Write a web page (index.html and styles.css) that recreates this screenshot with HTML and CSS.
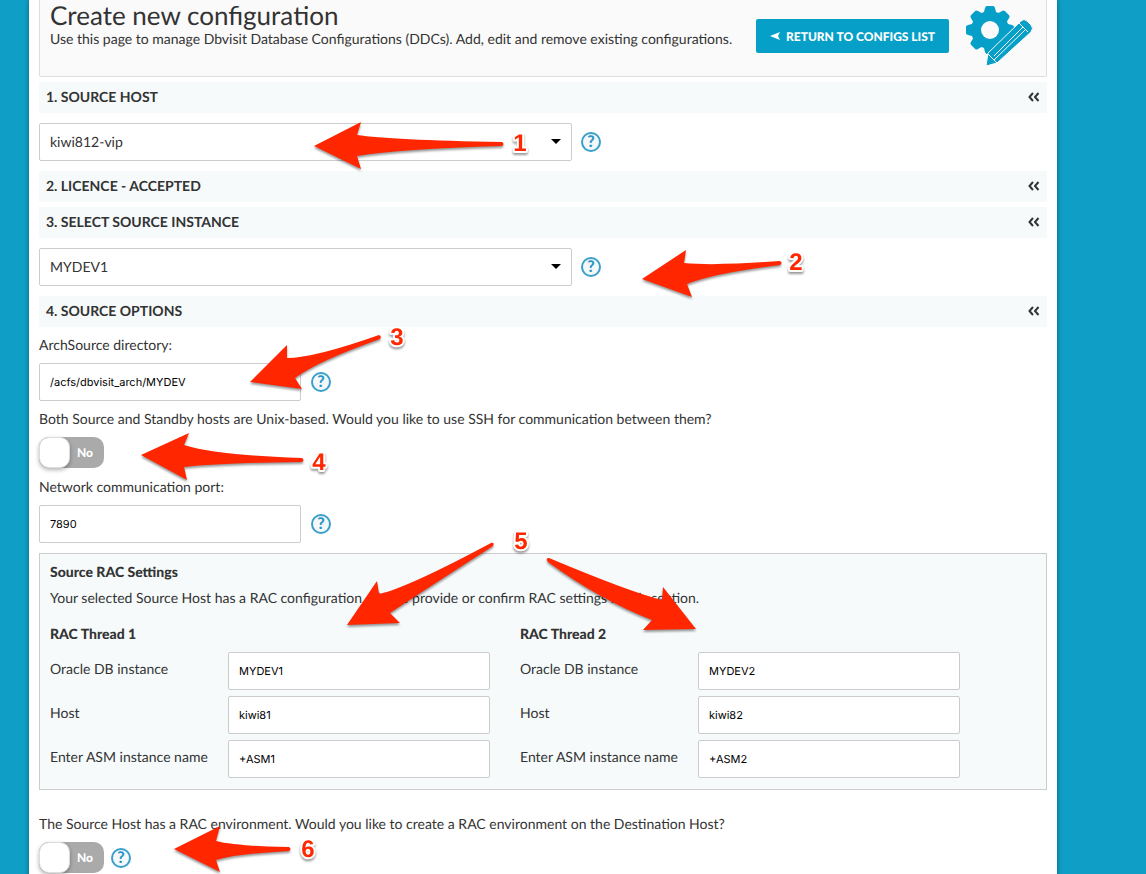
FILE: index.html
```html
<!DOCTYPE html>
<html lang="en">
<head>
    <meta charset="UTF-8">
    <meta name="viewport" content="width=device-width, initial-scale=1.0">
    <title>Create new configuration</title>
    <link rel="stylesheet" href="styles.css">
</head>
<body>
    <main class="page">
        <header class="page-header">
            <div class="page-title">
                <h1>Create new configuration</h1>
                <p>Use this page to manage Dbvisit Database Configurations (DDCs). Add, edit and remove existing configurations.</p>
            </div>
            <button type="button" class="return-button">
                <svg width="10" height="8" viewBox="0 0 10 8"><path d="M0 4 10 0 8 4 10 8Z" fill="#fff"/></svg>
                RETURN TO CONFIGS LIST
            </button>
            <svg class="config-icon" width="67" height="60" viewBox="0 0 67 60">
                <g fill="#059fc7">
                    <circle cx="24" cy="24" r="19"/>
                    <g id="teeth">
                        <path id="tooth" d="M17.500 8 19 2Q19.500 0 21 0H27Q28.500 0 29 2L30.500 8Z"/>
                        <use href="#tooth" transform="rotate(45 24 24)"/>
                        <use href="#tooth" transform="rotate(90 24 24)"/>
                        <use href="#tooth" transform="rotate(135 24 24)"/>
                        <use href="#tooth" transform="rotate(180 24 24)"/>
                        <use href="#tooth" transform="rotate(225 24 24)"/>
                        <use href="#tooth" transform="rotate(270 24 24)"/>
                        <use href="#tooth" transform="rotate(315 24 24)"/>
                    </g>
                </g>
                <circle cx="24" cy="24" r="9" fill="#fafafa"/>
                <path d="M20 60 22 47 55 15Q58 12 61 15L65 19Q68 22 65 26L31 57Z" fill="#059fc7" stroke="#fafafa" stroke-width="1"/>
                <path d="M22 48 31 57M53 17 62 26M28 54 59 24M22 48 28 54M57 21 28 50" fill="none" stroke="#fafafa" stroke-width="1"/>
            </svg>
        </header>

        <div class="section-bar">
            <h2>1. SOURCE HOST</h2>
            <button type="button" class="collapse" aria-label="Collapse source host"><svg width="12" height="10" viewBox="0 0 12 10"><path d="M5 1 1.500 5 5 9M10.500 1 7 5 10.500 9"/></svg></button>
        </div>
        <div class="field-row">
            <div class="select-box">
                <select aria-label="Source host"><option>kiwi812-vip</option></select>
            </div>
            <button type="button" class="help">?</button>
        </div>

        <div class="section-bar">
            <h2>2. LICENCE - ACCEPTED</h2>
            <button type="button" class="collapse" aria-label="Collapse licence"><svg width="12" height="10" viewBox="0 0 12 10"><path d="M5 1 1.500 5 5 9M10.500 1 7 5 10.500 9"/></svg></button>
        </div>

        <div class="section-bar">
            <h2>3. SELECT SOURCE INSTANCE</h2>
            <button type="button" class="collapse" aria-label="Collapse source instance"><svg width="12" height="10" viewBox="0 0 12 10"><path d="M5 1 1.500 5 5 9M10.500 1 7 5 10.500 9"/></svg></button>
        </div>
        <div class="field-row">
            <div class="select-box">
                <select aria-label="Source instance"><option>MYDEV1</option></select>
            </div>
            <button type="button" class="help">?</button>
        </div>

        <div class="section-bar">
            <h2>4. SOURCE OPTIONS</h2>
            <button type="button" class="collapse" aria-label="Collapse source options"><svg width="12" height="10" viewBox="0 0 12 10"><path d="M5 1 1.500 5 5 9M10.500 1 7 5 10.500 9"/></svg></button>
        </div>
        <form class="options">
            <label class="caption" for="archsource">ArchSource directory:</label>
            <div class="option-row">
                <input type="text" id="archsource" value="/acfs/dbvisit_arch/MYDEV">
                <button type="button" class="help">?</button>
            </div>

            <label class="caption" for="ssh">Both Source and Standby hosts are Unix-based. Would you like to use SSH for communication between them?</label>
            <div class="switch-row">
                <label class="switch">
                    <input type="checkbox" id="ssh">
                    <span class="knob"></span>
                    <span class="state">No</span>
                </label>
            </div>

            <label class="caption" for="port">Network communication port:</label>
            <div class="option-row">
                <input type="text" id="port" value="7890">
                <button type="button" class="help">?</button>
            </div>

            <section class="rac">
                <h3>Source RAC Settings</h3>
                <p>Your selected Source Host has a RAC configuration. Please provide or confirm RAC settings in this section.</p>
                <div class="threads">
                    <div class="thread">
                        <h3>RAC Thread 1</h3>
                        <div class="thread-row">
                            <label for="instance1">Oracle DB instance</label>
                            <input type="text" id="instance1" value="MYDEV1">
                        </div>
                        <div class="thread-row">
                            <label for="host1">Host</label>
                            <input type="text" id="host1" value="kiwi81">
                        </div>
                        <div class="thread-row">
                            <label for="asm1">Enter ASM instance name</label>
                            <input type="text" id="asm1" value="+ASM1">
                        </div>
                    </div>
                    <div class="thread">
                        <h3>RAC Thread 2</h3>
                        <div class="thread-row">
                            <label for="instance2">Oracle DB instance</label>
                            <input type="text" id="instance2" value="MYDEV2">
                        </div>
                        <div class="thread-row">
                            <label for="host2">Host</label>
                            <input type="text" id="host2" value="kiwi82">
                        </div>
                        <div class="thread-row">
                            <label for="asm2">Enter ASM instance name</label>
                            <input type="text" id="asm2" value="+ASM2">
                        </div>
                    </div>
                </div>
            </section>

            <label class="caption" for="rac">The Source Host has a RAC environment. Would you like to create a RAC environment on the Destination Host?</label>
            <div class="switch-row">
                <label class="switch">
                    <input type="checkbox" id="rac">
                    <span class="knob"></span>
                    <span class="state">No</span>
                </label>
                <button type="button" class="help">?</button>
            </div>
        </form>

        <!-- numbered arrows over the form -->
        <svg class="notes" width="1028" height="874" viewBox="29 0 1028 874">
            <g class="arrows">
                <path d="M314 146 361 122 357 135Q390 140 502 142Q505 144 502 146Q400 149 357 156L361 169Z"/>
                <path d="M642 279 686 250 684 263Q714 266 780 261Q783 263 780 265Q715 273 687 284L692 297Z"/>
                <path d="M250 382 287 345 287 358Q314 358 379 335Q382 336 380 339Q318 361 295 378L302 389Z"/>
                <path d="M141 455 189 433 184 445Q215 455 302 458Q305 460 302 462Q220 463 184 467L187 480Z"/>
                <path d="M347 625 377 581 379 594Q407 588 491 543Q495 542 493 546Q420 593 390 613L400 623Z"/>
                <path d="M696 629 663 587 662 600Q630 592 549 558Q545 558 548 562Q600 600 652 620L643 630Z"/>
                <path d="M174 849 220 826 216 841Q235 846 289 847Q292 849 289 851Q235 854 216 860L220 872Z"/>
            </g>
            <g class="numbers">
                <text x="520" y="151">1</text>
                <text x="796" y="270">2</text>
                <text x="397" y="345">3</text>
                <text x="319" y="470">4</text>
                <text x="521" y="549">5</text>
                <text x="308" y="857">6</text>
            </g>
        </svg>
    </main>
</body>
</html>
```

FILE: styles.css
```css
*{
    margin: 0;
    padding: 0;
    box-sizing: border-box;
}

body{
    background: #0f9fc6;
    color: #333;
    font-family: Lato, "Liberation Sans", sans-serif;
    font-size: 14px;
    line-height: 20px;
    text-rendering: geometricPrecision;
}

button, select, input{
    font-family: inherit;
    color: inherit;
    border: none;
    background: none;
    text-rendering: inherit;
}

.page{
    position: relative;
    min-height: 100vh;
    margin: 0 89px 0 29px;
    padding: 0 10px;
    background: #fff;
    box-shadow: 0 0 5px rgba(0, 0, 0, .4);
}

/* header */
.page-header{
    display: flex;
    align-items: flex-start;
    height: 77px;
    padding: 0 13px 0 10px;
    background: #fafafa;
    border: 1px solid #ddd;
    border-top: none;
    border-radius: 0 0 2px 2px;
}

.page-title{
    flex: 1;
}

.page-title h1{
    font-size: 26px;
    font-weight: 400;
    line-height: 30px;
}

.page-title p{
    line-height: 18px;
}

.return-button{
    display: flex;
    align-items: center;
    justify-content: center;
    gap: 6px;
    width: 193px;
    height: 34px;
    margin-top: 19px;
    border-radius: 2px;
    background: #059fc7;
    color: #fff;
    font-size: 12px;
    font-weight: 900;
    white-space: nowrap;
}

.config-icon{
    margin: 6px 0 0 17px;
}

/* sections */
.section-bar{
    display: flex;
    align-items: center;
    justify-content: space-between;
    height: 31px;
    margin-top: 5px;
    padding: 0 7px 1px;
    background: #f6fafb;
}

.section-bar h2{
    font-size: 14px;
    font-weight: 700;
}

.collapse{
    display: flex;
}

.collapse path{
    fill: none;
    stroke: #333;
    stroke-width: 2;
}

.field-row, .option-row, .switch-row{
    display: flex;
    align-items: center;
    gap: 10px;
}

.field-row{
    gap: 9px;
    padding: 10px 0;
}

.field-row + .section-bar{
    margin-top: 0;
}

.select-box{
    position: relative;
    width: 533px;
}

.select-box::after{
    content: "";
    position: absolute;
    top: 16px;
    right: 11px;
    border: 5px solid transparent;
    border-top-color: #000;
    border-bottom: none;
}

select{
    appearance: none;
    width: 100%;
    height: 38px;
    padding: 0 10px 1px;
    border: 1px solid #ccc;
    border-radius: 2px;
    background: #fff;
    font-size: 14px;
}

input[type="text"]{
    width: 262px;
    height: 38px;
    padding: 0 10px;
    border: 1px solid #ccc;
    border-radius: 2px;
    background: #fff;
    color: #000;
    font-family: Inter, "Liberation Sans", sans-serif;
    font-size: 11px;
}

.help{
    width: 20px;
    height: 20px;
    border: 2px solid #3aa0ca;
    border-radius: 50%;
    background: #f4f8fb;
    color: #2b96c4;
    font-size: 16px;
    font-weight: 900;
    line-height: 16px;
    text-align: center;
}

/* source options */
.options{
    padding-top: 8px;
}

.caption{
    display: block;
}

.option-row{
    padding: 8px 0;
}

.switch-row{
    gap: 7px;
    padding: 8px 0 9px;
}

.switch{
    position: relative;
    display: flex;
    align-items: center;
    width: 65px;
    height: 31px;
    border-radius: 10px;
    background: #aaa;
}

.switch input{
    position: absolute;
    opacity: 0;
}

.knob{
    width: 31px;
    height: 31px;
    border: 1px solid #ddd;
    border-radius: 10px;
    background: #fff;
    box-shadow: 0 2px 4px rgba(0, 0, 0, .3);
}

.state{
    margin-left: 7px;
    color: #fff;
    font-size: 12px;
    font-weight: 900;
}

.rac{
    margin: 2px 0 24px;
    padding: 8px 10px 11px;
    border: 1px solid #ccc;
    background: #f6fafb;
}

.rac h3{
    font-size: 14px;
    font-weight: 900;
}

.rac p{
    margin: 6px 0 16px;
}

.threads{
    display: flex;
    gap: 30px;
}

.thread{
    display: grid;
    gap: 6px;
    width: 440px;
}

.thread h3{
    margin-bottom: 2px;
}

.thread-row{
    display: flex;
    justify-content: space-between;
}

.thread-row label{
    padding-top: 7px;
}

/* arrows */
.notes{
    position: absolute;
    top: 0;
    left: 0;
    pointer-events: none;
}

.arrows{
    fill: #ff2600;
    filter: drop-shadow(0 2px 1px rgba(0, 0, 0, .4));
}

.numbers{
    fill: #ff2600;
    stroke: #fff;
    stroke-width: 4px;
    stroke-linejoin: round;
    paint-order: stroke;
    font-family: "Liberation Sans", Arial, sans-serif;
    font-size: 24px;
    font-weight: 700;
    text-anchor: middle;
    filter: drop-shadow(0 2px 1px rgba(0, 0, 0, .4));
}
```
